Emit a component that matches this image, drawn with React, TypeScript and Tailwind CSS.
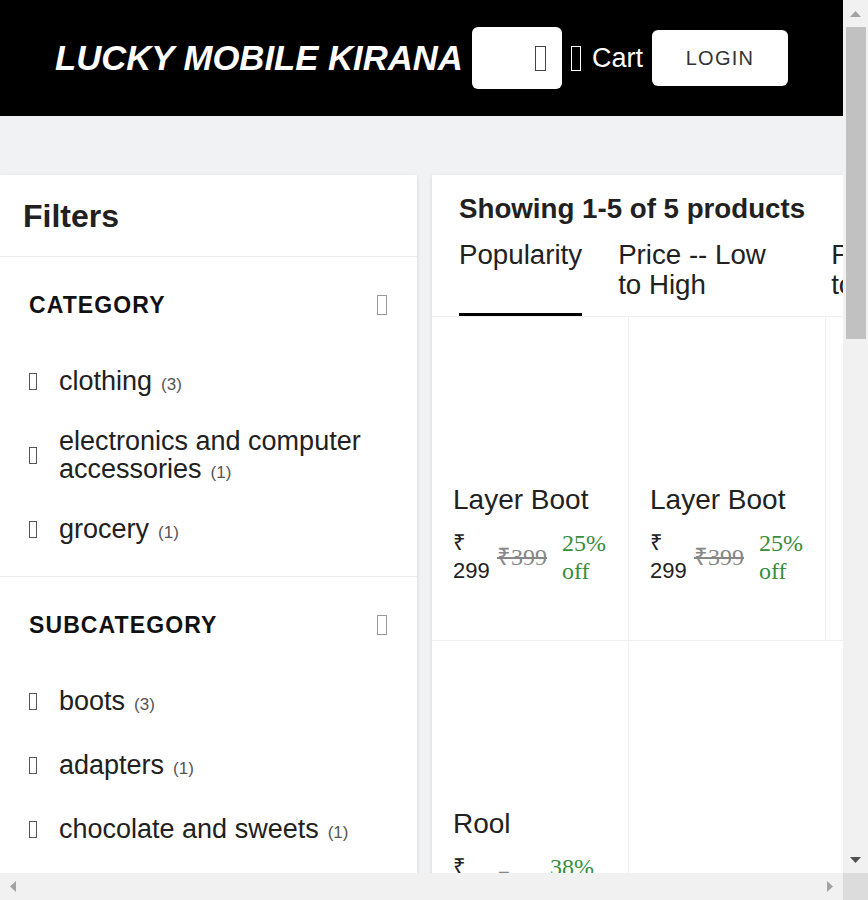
import React from "react";

function Tofu({ className }: { className: string }) {
  return <span className={"inline-block shrink-0 " + className} />;
}

type Item = { label: string; count: number };

function FilterSection({
  title,
  items,
  gap,
  last,
}: {
  title: string;
  items: Item[];
  gap: string;
  last?: boolean;
}) {
  return (
    <div className={"pt-[34px] pl-[29px] pr-[29px] " + (last ? "" : "pb-[33px] border-b border-[#ececec]")}>
      <div className="flex h-[28px] items-center justify-between">
        <span className="text-[23px] font-bold tracking-[1.1px] text-[#111]">{title}</span>
        <Tofu className="w-[10px] h-[20px] border border-[#9a9a9a] mr-[1px]" />
      </div>
      <div className={"mt-[48px] flex flex-col " + gap}>
        {items.map((it) => (
          <div key={it.label} className="flex items-center">
            <Tofu className="w-[8px] h-[17px] border border-[#555]" />
            <div className="ml-[22px] flex-1 text-[27px] leading-[28px] text-[#212121]">
              {it.label}
              <span className="ml-[9px] text-[17px] leading-none text-[#555]">({it.count})</span>
            </div>
          </div>
        ))}
      </div>
    </div>
  );
}

type Product = { name: string; price: number; mrp: number; off: number };

const products: Product[] = [
  { name: "Layer Boot", price: 299, mrp: 399, off: 25 },
  { name: "Layer Boot", price: 299, mrp: 399, off: 25 },
  { name: "Layer Boot", price: 299, mrp: 399, off: 25 },
  { name: "Charger", price: 199, mrp: 299, off: 33 },
  { name: "Rool", price: 49, mrp: 79, off: 38 },
];

function ProductCard({ p }: { p: Product }) {
  return (
    <div className="h-[324px] border-r border-b border-[#f0f0f0] pl-[21px] pr-[10px] pt-[169px]">
      <div className="text-[28px] leading-[28px] text-[#212121] whitespace-nowrap">{p.name}</div>
      <div className="mt-[15px] flex items-center">
        <div className="w-[36px] text-[22px] leading-[28px] text-[#212121]">₹ {p.price}</div>
        <div className="ml-[8px] font-['Liberation_Serif',serif] text-[24px] leading-[28px] text-[#878787] line-through">
          ₹{p.mrp}
        </div>
        <div className="ml-[15px] w-[48px] font-['Liberation_Serif',serif] text-[24px] leading-[28px] text-[#388e3c]">
          {p.off}% off
        </div>
      </div>
    </div>
  );
}

function Arrow({ dir, color }: { dir: "up" | "down" | "left" | "right"; color: string }) {
  const pts =
    dir === "up"
      ? "0,6 5.5,0 11,6"
      : dir === "down"
      ? "0,0 11,0 5.5,6"
      : dir === "left"
      ? "6,0 6,11 0,5.5"
      : "0,0 0,11 6,5.5";
  const w = dir === "up" || dir === "down" ? 11 : 6;
  const h = dir === "up" || dir === "down" ? 6 : 11;
  return (
    <svg width={w} height={h} viewBox={`0 0 ${w} ${h}`}>
      <polygon points={pts} fill={color} />
    </svg>
  );
}

export default function App() {
  return (
    <div className="w-[868px] h-[900px] flex flex-col overflow-hidden font-['Liberation_Sans',Arial,sans-serif]">
      <div className="flex h-[873px]">
        <div className="w-[843px] h-full overflow-hidden bg-[#f1f2f4]">
          <header className="w-[843px] h-[116px] bg-black flex items-center gap-[9px] pl-[55px]">
            <span className="text-[34.7px] font-bold italic text-white whitespace-nowrap leading-none">
              LUCKY MOBILE KIRANA
            </span>
            <div className="w-[90px] h-[62px] bg-white rounded-[6px] flex items-center justify-end pr-[16px]">
              <Tofu className="w-[11px] h-[25px] border-[1.5px] border-[#444]" />
            </div>
            <div className="flex items-center">
              <Tofu className="w-[10px] h-[25px] border-[1.5px] border-white" />
              <span className="ml-[11px] text-[27px] text-white">Cart</span>
            </div>
            <button className="w-[136px] h-[56px] bg-white rounded-[6px] text-[20px] tracking-[1.2px] text-[#333]">
              LOGIN
            </button>
          </header>

          <div className="pt-[59px] flex items-start gap-[15px] w-[1300px]">
            <aside className="w-[417px] shrink-0 bg-white shadow-[0_1px_4px_0_rgba(0,0,0,0.12)] pb-[80px]">
              <div className="h-[82px] flex items-center px-[23px] border-b border-[#ececec]">
                <span className="text-[32px] font-bold text-[#212121]">Filters</span>
              </div>
              <FilterSection
                title="CATEGORY"
                gap="gap-[32px]"
                items={[
                  { label: "clothing", count: 3 },
                  { label: "electronics and computer accessories", count: 1 },
                  { label: "grocery", count: 1 },
                ]}
              />
              <FilterSection
                title="SUBCATEGORY"
                gap="gap-[36px]"
                last
                items={[
                  { label: "boots", count: 3 },
                  { label: "adapters", count: 1 },
                  { label: "chocolate and sweets", count: 1 },
                ]}
              />
            </aside>

            <main className="w-[800px] shrink-0 bg-white shadow-[0_1px_4px_0_rgba(0,0,0,0.12)]">
              <div className="pl-[27px] pt-[18px] text-[27.7px] leading-[32px] font-bold text-[#212121]">
                Showing 1-5 of 5 products
              </div>
              <div className="mt-[15px] h-[77px] flex gap-[36px] pl-[27px] border-b border-[#f0f0f0]">
                <div className="h-[76px] border-b-[3px] border-black text-[27.7px] leading-[30px] text-[#212121]">
                  Popularity
                </div>
                <div className="w-[177px] pr-[17px] text-[27.7px] leading-[30px] text-[#212121]">
                  Price -- Low to High
                </div>
                <div className="w-[177px] pr-[17px] text-[27.7px] leading-[30px] text-[#212121]">
                  Price -- High to Low
                </div>
                <div className="w-[177px] pr-[17px] text-[27.7px] leading-[30px] text-[#212121]">
                  Newest First
                </div>
              </div>
              <div className="grid grid-cols-[repeat(4,197px)]">
                {products.map((p, i) => (
                  <ProductCard key={i} p={p} />
                ))}
              </div>
            </main>
          </div>
        </div>

        <div className="w-[25px] h-full bg-[#f1f1f1] flex flex-col">
          <div className="h-[27px] flex items-center justify-center">
            <Arrow dir="up" color="#a3a3a3" />
          </div>
          <div className="flex-1">
            <div className="ml-[3px] mr-[2px] h-[312px] bg-[#c1c1c1]" />
          </div>
          <div className="h-[27px] flex items-center justify-center">
            <Arrow dir="down" color="#505050" />
          </div>
        </div>
      </div>
      <div className="flex h-[27px]">
        <div className="w-[843px] h-full bg-[#f1f1f1] flex items-center justify-between px-[10px]">
          <Arrow dir="left" color="#a3a3a3" />
          <Arrow dir="right" color="#a3a3a3" />
        </div>
        <div className="w-[25px] h-full bg-[#dcdcdc]" />
      </div>
    </div>
  );
}
